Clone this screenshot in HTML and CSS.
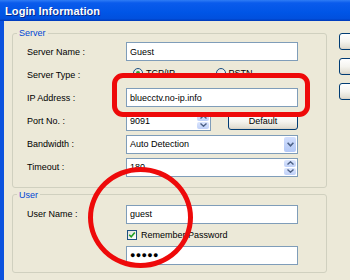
FILE: index.html
```html
<!DOCTYPE html>
<html>
<head>
<meta charset="utf-8">
<link rel="stylesheet" href="styles.css">
</head>
<body>
<div class="window">
  <div class="titlebar"><span class="title">Login Information</span></div>
  <div class="body">
    <div class="main">
      <fieldset class="group">
        <legend>Server</legend>
        <div class="grid server-grid">
          <span class="lbl">Server Name :</span>
          <div class="input"><span>Guest</span></div>

          <span class="lbl">Server Type :</span>
          <div class="radios">
            <span class="radio-item"><span class="radio on"></span>TCP/IP</span>
            <span class="radio-item second"><span class="radio"></span>PSTN</span>
          </div>

          <span class="lbl">IP Address :</span>
          <div class="input"><span>bluecctv.no-ip.info</span></div>

          <span class="lbl">Port No. :</span>
          <div class="port">
            <div class="input spin-input">
              <span>9091</span>
              <span class="spin">
                <span class="sb"><svg width="7" height="4" viewBox="0 0 7 4"><path d="M0.5 3.5 L3.5 0.8 L6.5 3.5" fill="none" stroke="#4D6185" stroke-width="1.4"/></svg></span>
                <span class="sb"><svg width="7" height="4" viewBox="0 0 7 4"><path d="M0.5 0.5 L3.5 3.2 L6.5 0.5" fill="none" stroke="#4D6185" stroke-width="1.4"/></svg></span>
              </span>
            </div>
            <button class="btn default">Default</button>
          </div>

          <span class="lbl">Bandwidth :</span>
          <div class="input">
            <span>Auto Detection</span>
            <span class="dd"><svg width="7" height="5" viewBox="0 0 7 5"><path d="M0.6 0.8 L3.5 3.8 L6.4 0.8" fill="none" stroke="#4D6185" stroke-width="1.6"/></svg></span>
          </div>

          <span class="lbl">Timeout :</span>
          <div class="input">
            <span>180</span>
            <span class="spin">
              <span class="sb"><svg width="7" height="4" viewBox="0 0 7 4"><path d="M0.5 3.5 L3.5 0.8 L6.5 3.5" fill="none" stroke="#4D6185" stroke-width="1.4"/></svg></span>
              <span class="sb"><svg width="7" height="4" viewBox="0 0 7 4"><path d="M0.5 0.5 L3.5 3.2 L6.5 0.5" fill="none" stroke="#4D6185" stroke-width="1.4"/></svg></span>
            </span>
          </div>
        </div>
      </fieldset>

      <fieldset class="group user">
        <legend>User</legend>
        <div class="grid user-grid">
          <span class="lbl">User Name :</span>
          <div class="input"><span>guest</span></div>

          <span></span>
          <div class="check-row">
            <span class="checkbox"><svg width="8" height="8" viewBox="0 0 8 8"><path d="M1.2 3.8 L3.2 5.8 L6.8 1.6" fill="none" stroke="#21A121" stroke-width="1.6"/></svg></span>
            <span>Remember Password</span>
          </div>

          <span></span>
          <div class="input"><span class="dots">&#9679;&#9679;&#9679;&#9679;&#9679;</span></div>
        </div>
      </fieldset>
    </div>
    <div class="side">
      <button class="btn side-btn"></button>
      <button class="btn side-btn"></button>
      <button class="btn side-btn"></button>
    </div>
  </div>
  <div class="mark mark-rect"></div>
  <div class="mark mark-circle"></div>
</div>
</body>
</html>
```

FILE: styles.css
```css
html, body {
  margin: 0;
  padding: 0;
}
body {
  width: 350px;
  height: 280px;
  overflow: hidden;
  background: #ECE9D8;
  font-family: "Liberation Sans", Arial, sans-serif;
  font-size: 9px;
  color: #000;
}
.window {
  position: relative;
  width: 350px;
  height: 280px;
  overflow: hidden;
}
.titlebar {
  height: 21px;
  box-sizing: border-box;
  background: linear-gradient(#2F7CF5 0%, #0A5BEC 14%, #0055E6 60%, #0150DE 88%, #0039B8 100%);
  display: flex;
  align-items: center;
  padding-left: 5px;
}
.title {
  color: #fff;
  font-weight: bold;
  font-size: 11px;
  text-shadow: 1px 1px 0 #0A2B8A;
  letter-spacing: 0.1px;
}
.body {
  display: flex;
  height: 259px;
  border-left: 4px solid #0B52DE;
  padding-left: 8px;
}
.main {
  width: 315px;
  flex: none;
  padding-top: 7px;
  display: flex;
  flex-direction: column;
}
.group {
  margin: 0;
  padding: 0;
  border: 1px solid #D0D0BF;
  border-radius: 3px;
  min-width: 0;
}
.group legend {
  margin-left: 4px;
  padding: 0 2px;
  line-height: 10px;
  height: 10px;
  color: #0046D5;
  font-size: 9px;
}
.user {
  margin-top: 2px;
}
.grid {
  display: grid;
  grid-template-columns: 99px 172px;
  padding-left: 14px;
  align-items: center;
}
.server-grid {
  grid-template-rows: repeat(6, 19px);
  row-gap: 4.2px;
  padding-top: 4px;
  padding-bottom: 10px;
}
.user-grid {
  grid-template-rows: 19px 18px 19px;
  row-gap: 2px;
  padding-top: 5px;
  padding-bottom: 7px;
}
.lbl {
  white-space: nowrap;
}
.input {
  height: 19px;
  box-sizing: border-box;
  border: 1px solid #7F9DB9;
  background: #fff;
  display: flex;
  align-items: center;
  padding-left: 3px;
  white-space: nowrap;
}
.spin, .dd {
  margin-left: auto;
  align-self: stretch;
  margin-top: 1px;
  margin-bottom: 1px;
  margin-right: 1px;
  width: 12px;
}
.spin {
  display: flex;
  flex-direction: column;
  gap: 1px;
}
.sb {
  flex: 1;
  display: flex;
  align-items: center;
  justify-content: center;
  background: linear-gradient(#DCE6FD, #BFD0F8);
  border-radius: 2px;
}
.dd {
  display: flex;
  align-items: center;
  justify-content: center;
  background: linear-gradient(#D2DFFD, #B3C8F6);
  border-radius: 2px;
}
.radios {
  display: flex;
  align-items: center;
  padding-left: 7px;
  margin-top: -3px;
}
.radio-item {
  display: flex;
  align-items: center;
  gap: 3px;
  width: 85px;
}
.radio {
  width: 10px;
  height: 10px;
  box-sizing: border-box;
  border: 1px solid #1C5180;
  border-radius: 50%;
  background: linear-gradient(135deg, #DCDCD7, #fff);
  display: inline-flex;
  align-items: center;
  justify-content: center;
}
.radio.on::after {
  content: "";
  width: 4px;
  height: 4px;
  border-radius: 50%;
  background: #2BA12B;
}
.port {
  display: flex;
  align-items: center;
}
.spin-input {
  width: 85px;
}
.btn {
  font-family: inherit;
  font-size: 9px;
  color: #000;
  border: 1px solid #003C74;
  border-radius: 3px;
  background: linear-gradient(#FFFFFF 0%, #F5F4EF 50%, #E3E0D5 88%, #D6D0C5 100%);
  padding: 0;
  box-sizing: border-box;
}
.default {
  margin-left: 17px;
  width: 70px;
  height: 17px;
}
.check-row {
  display: flex;
  align-items: center;
  padding-left: 1px;
  gap: 4px;
}
.checkbox {
  width: 10px;
  height: 10px;
  box-sizing: border-box;
  border: 1px solid #1C5180;
  background: linear-gradient(135deg, #E0E0DA, #fff);
  display: inline-flex;
  align-items: center;
  justify-content: center;
}
.dots {
  font-size: 9px;
  letter-spacing: 0.3px;
}
.side {
  margin-left: 12px;
  padding-top: 12px;
  display: flex;
  flex-direction: column;
  gap: 8px;
}
.side-btn {
  width: 60px;
  height: 17px;
  flex: none;
}
.mark {
  position: absolute;
  box-sizing: border-box;
  border: 5px solid #EE0A0A;
  pointer-events: none;
}
.mark-rect {
  left: 112px;
  top: 73px;
  width: 198px;
  height: 44px;
  border-radius: 11px;
}
.mark-circle {
  left: 88px;
  top: 167px;
  width: 105px;
  height: 101px;
  border-radius: 50%;
}
```
